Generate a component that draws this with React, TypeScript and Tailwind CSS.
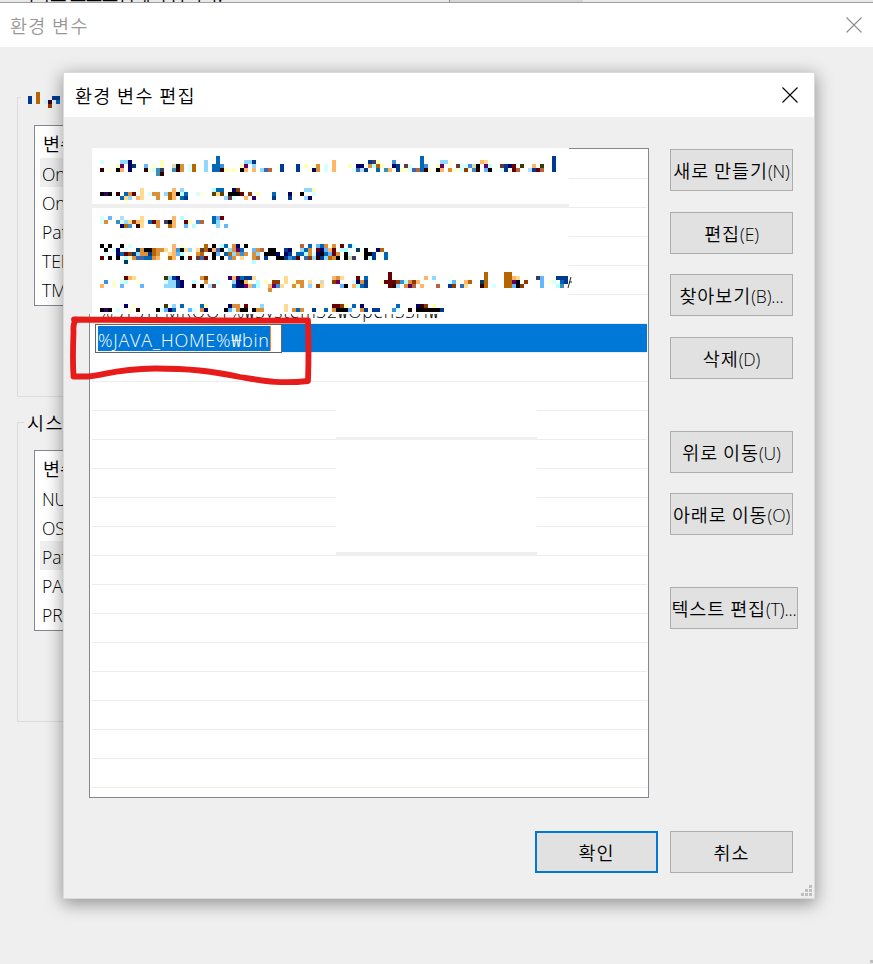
import React from "react";

const FONT = "font-['Open_Sans','Noto_Sans_CJK_KR',sans-serif]";
const KR = "font-['Noto_Sans_CJK_KR',sans-serif] font-[350]";

const PALETTE: Record<string, string> = {
  k: "#000000", d: "#330000", n: "#000066", b: "#0066b6", B: "#003a90",
  l: "#90d8ff", L: "#66b6ff", A: "#3a90db", c: "#d8ffff", C: "#b6ffff",
  y: "#ffffd8", Y: "#ffffb6", o: "#db9038", O: "#ffb666", t: "#ffdb90",
  r: "#b66600", p: "#330066", P: "#660066", m: "#660000", s: "#903a00",
  g: "#dbdbb6", h: "#3a90b6", i: "#3a66b6", j: "#003a66", q: "#b66638",
  v: "#3a3a00", w: "#b6dbff", x: "#664000", z: "#663838", u: "#3a3a66",
};

/* Each entry is a 4px tall strip: [y, "column+cells ..."] */
const MOSAIC: [number, string][] = [
  [156, "29b 80b 113B"],
  [160, "0c 5lln 15Y 26l 29b 36llB 58O 67BuY 73A 80b 85lly 95Ot 113B"],
  [164, "4YP 7nj 11L 13y 15Y 18gko 22cr 26l 28bbA 35YP 38l 45B 49B 51Y 53yo 56c 58O 62Y 64nn 67oCrY 73nB 76zc 80bA 84YP 87y 89zccAgk 96PC 100zBnm 105v 108O 110v 113B"],
  [168, "0d 2y 4kO 7n 11dychu 18hdo 22cr 26l 28bbdYyY 35kO 38O 40liq 45B 49B 52yno 56c 58O 63ciwB 69b 71hO 74BYyciqbdy 84kO 87oyycs 93hd 96Lk 100cBy 103mq 107wBmq 113B"],
  [172, "14hd"],
  [188, "10t 18O 20l 28Cbb 33ns 51llY"],
  [192, "0kpk 4d 6bom 10t 12coo 16lrOkCb 24cy 28xtx 32kkkm 37s 39Y 43b 47ny 50k 53c"],
  [196, "5btl 9Ot 14o 17rO 20bB 31lzc 36O 38p 43B 47B 51ln"],
  [200, "6y"],
  [216, "0c 2L 5w 10t 18O 20C 28bLm"],
  [220, "0co 4hcltsOt 12bmo 16ukO 21mY 24Aq 28bl"],
  [224, "5nrA 9dt 14o 17rO 21L 23C 29l 31L"],
  [244, "0k 2k 5k 7c 18O 20y 26r 28k 30Cb 33on 36k 50q 52b 54Lbo 58o 60m 62bc"],
  [248, "1k 3cn 6c 9jokk 13ro 15ot 18OAktl 24tzrd 28Oik 32loPb 38Loq 42kk 46Bny 50lbo 54mnLOm 60CC 64j 66k 69nr"],
  [252, "1c 4nbmsjl 10ooBro 17tOLC 22y 24or 28kL 31brlo 35Ao 38ol 41kkkn 46nB 49bbC 52ocnkbLmo 61kc 65ykkB 71b"],
  [256, "0m 2k 4k 6CyoiibboO 17rO 20kcm 24zim 28k 30k 32Ao 35t 38oq 41B 44kkBAbm 51isl 54dBlro 59k 61kgu 66kcB 71b"],
  [260, "6j 38C"],
  [272, "72m 96r 101rr"],
  [276, "6mOt 16vlBn 25os 32pO 34pbBBt 46t 58Oot 64m 66b 72m 81O 83l 96r 101rrOt 109uL 114BBB"],
  [280, "1A 3y 5cC 9y 16cllBn 23C 26o 29c 33lnkOy 39C 41Y 43ss 46t 48yoo 52t 55g 58sP 63cnoB 70ym 72mmsACosO 87cLy 91Or 95jr 101rrPk 106s 110L 112yc 115bB"],
  [284, "0O 3y 5L 10L 16lllBn 23d 25k 27wz 33bnnPO 38LC 42OPAt 48oyo 52l 54st 60Lk 63OCbB 72mdl 76oPq 80O 84q 87Bs 90it 95dr 98c 101rrLk 105s 110L 114Ch"],
  [288, "42o"],
  [304, "6n 8y 16v 18l 20b 25bY 32noo 36m 40l 46t 58mmsY 63b 65n 74b 79nds 83Y"],
  [308, "0kpk 4c 7y 9d 14kcLnb 22Lc 25on 31kLcokk 38koo 46t 48ob 50o 53B 55yb 58okkkL 65oB 68BB 73Ac 77d 79kkkkkkB"],
];

function Mosaic() {
  const cells: React.ReactElement[] = [];
  MOSAIC.forEach(([y, row]) =>
    row.split(" ").forEach((token) => {
      const col = parseInt(token, 10);
      const letters = token.replace(/^\d+/, "");
      letters.split("").forEach((ch, i) => {
        cells.push(
          <rect key={`${y}-${col + i}`} x={100 + (col + i) * 4 - 89} y={y - 148} width={4} height={4} fill={PALETTE[ch]} />,
        );
      });
    }),
  );
  return (
    <svg className="absolute left-0 top-0" width="560" height="175" shapeRendering="crispEdges">
      <rect x="0" y="0" width="3" height="166" fill="#efefef" />
      <rect x="3" y="0" width="477" height="166" fill="#ffffff" />
      <rect x="3" y="56" width="477" height="4" fill="#efefef" />
      {cells}
      <path d="M482 129l-3 11M480 134h3" stroke="#222" fill="none" shapeRendering="auto" />
    </svg>
  );
}

function Close({ color }: { color: string }) {
  return (
    <svg width="16" height="16" viewBox="0 0 16 16">
      <path d="M.5 .5L15.5 15.5M15.5 .5L.5 15.5" stroke={color} strokeWidth="1.1" />
    </svg>
  );
}

function Grip({ className }: { className: string }) {
  return (
    <svg className={className} width="11" height="11" shapeRendering="crispEdges" fill="#bfbfbf">
      <path d="M8 0h3v3h-3zM4 4h3v3h-3zM8 4h3v3h-3zM0 8h3v3h-3zM4 8h3v3h-3zM8 8h3v3h-3z" />
    </svg>
  );
}

function VarList({ names, selected }: { names: string[]; selected: number }) {
  return (
    <div className="h-[181px] w-[600px] border border-[#828790] bg-white pl-[5px] pt-[3px]">
      <div className={`h-[29px] pl-[3px] text-[18.5px] leading-[28px] ${KR}`}>변수</div>
      {names.map((name, i) => (
        <div key={name + i} className={`h-[29px] pl-[2px] text-[17.5px] font-[350] leading-[32px] ${i === selected ? "bg-[#efefef]" : ""}`}>
          {name}
        </div>
      ))}
    </div>
  );
}

function Button({ label, hot = "", className = "", primary = false }: { label: string; hot?: string; className?: string; primary?: boolean }) {
  return (
    <button
      className={`flex h-[42px] shrink-0 items-center justify-center overflow-hidden whitespace-nowrap bg-[#e1e1e1] text-black ${
        primary ? "border-2 border-[#0078d7]" : "border border-[#adadad]"
      } ${className}`}
    >
      <span className={`${KR} text-[18.5px] leading-[40px] tracking-[0.9px]`}>{label}</span>
      {hot && <span className="relative top-[1px] text-[17.5px] font-[350] leading-[40px] tracking-[-0.1px]">{hot}</span>}
    </button>
  );
}

export default function App() {
  return (
    <div className={`relative flex h-[964px] w-[873px] flex-col overflow-hidden bg-[#efefef] text-black ${FONT}`}>
      <div className="flex h-[3px] shrink-0 overflow-hidden border-b border-[#a0a0a0] bg-[#e8e8e8]">
        <div className={`relative w-[450px] border-r border-[#888] pl-[18px] ${KR}`}>
          <span className="relative -top-[16px] block whitespace-nowrap text-[18px] leading-[20px] tracking-[-0.5px]">시작도 프로그램에서 합니다.</span>
        </div>
        <div className="w-[133px] bg-[#d6d6d6]" />
      </div>
      <header className="flex h-[44px] shrink-0 items-center justify-between bg-white pl-[10px] pr-[11px]">
        <span className={`${KR} text-[18.5px] leading-[42px] tracking-[1.3px] text-[#999]`}>환경 변수</span>
        <Close color="#8c8c8c" />
      </header>

      <main className="flex flex-col gap-[25px] pl-[17px] pt-[50px]">
        <section className="relative h-[300px] w-[640px] border border-[#dcdcdc] pl-[16px] pt-[27px]">
          <svg className="absolute left-[3px] top-[-9px] bg-[#efefef]" width="50" height="20" shapeRendering="crispEdges">
            <path d="M7 7h4v8h-4z" fill="#003a90" />
            <path d="M15 3h4v12h-4z" fill="#b66600" />
            <path d="M23 11h4v4h-4z" fill="#c8f4f4" />
            <path d="M27 11h4v4h-4z" fill="#330033" />
            <path d="M27 15h4v4h-4z" fill="#903a00" />
            <path d="M31 7h8v4h-8z" fill="#003a90" />
            <path d="M35 11h4v4h-4z" fill="#0066b6" />
          </svg>
          <VarList names={["OneDrive", "OneDriveConsumer", "Path", "TEMP", "TMP"]} selected={0} />
        </section>
        <section className="relative h-[300px] w-[640px] border border-[#dcdcdc] pl-[16px] pt-[27px]">
          <span className={`absolute left-[6px] top-[-14px] bg-[#efefef] px-[3px] text-[18.5px] leading-[26px] tracking-[1.5px] ${KR}`}>시스템 변수</span>
          <VarList names={["NUMBER_OF_PROCESSORS", "OS", "Path", "PATHEXT", "PROCESSOR"]} selected={2} />
        </section>
      </main>
      <Grip className="absolute -bottom-[7px] right-0" />

      <div className="absolute left-[63px] top-[72px] flex h-[827px] w-[752px] flex-col border border-[#dadada] bg-[#efefef] shadow-[0_4px_16px_1px_rgba(0,0,0,0.38)]">
        <header className="flex h-[44px] shrink-0 items-center justify-between bg-white pl-[11px] pr-[16px]">
          <span className={`${KR} text-[18.5px] leading-[42px] tracking-[1.3px]`}>환경 변수 편집</span>
          <Close color="#000" />
        </header>

        <div className="flex gap-[21px] pl-[25px] pt-[31px]">
          <div className="relative h-[650px] w-[560px] shrink-0 border border-[#828790] bg-white pl-[2px] pr-px">
            {Array.from({ length: 22 }, (_, i) => (
              <div
                key={i}
                className={`relative border-b border-[#ececec] ${i === 0 ? "h-[30px]" : "h-[29px]"} ${i === 6 ? "bg-[#0078d7]" : ""}`}
              >
                {i === 5 && (
                  <span className="block whitespace-nowrap pl-[7px] text-[17.5px] font-[350] leading-[32px] tracking-[0.75px]">%SYSTEMROOT%₩System32₩OpenSSH₩</span>
                )}
                {i === 6 && (
                  <div className="absolute left-0 top-0 flex bg-white pl-[3px]">
                    <div className="flex h-[29px] w-[187px] items-center border border-[#646464] bg-white pl-[2px]">
                      <span className="h-[25px] w-[173px] whitespace-nowrap border-r border-[#ff8728] bg-[#0078d7] text-[18px] font-[350] leading-[29px] tracking-[0.75px] text-white">
                        %JAVA_HOME%₩bin
                      </span>
                    </div>
                  </div>
                )}
              </div>
            ))}
            <div className="absolute left-[246px] top-[257px] h-[34px] w-[201px] border-b-[3px] border-[#efefef] bg-white" />
            <div className="absolute left-[246px] top-[292px] h-[115px] w-[201px] border-b-[4px] border-[#efefef] bg-white" />
            <div className="absolute -left-px -top-px">
              <Mosaic />
            </div>
          </div>

          <div className="flex flex-col items-start pt-px">
            <Button className="w-[123px]" label="새로 만들기" hot="(N)" />
            <Button className="mt-[21px] w-[123px]" label="편집" hot="(E)" />
            <Button className="mt-[20px] w-[123px]" label="찾아보기" hot="(B)..." />
            <Button className="mt-[21px] w-[123px]" label="삭제" hot="(D)" />
            <Button className="mt-[52px] w-[123px]" label="위로 이동" hot="(U)" />
            <Button className="mt-[20px] w-[123px]" label="아래로 이동" hot="(O)" />
            <Button className="mt-[52px] w-[128px]" label="텍스트 편집" hot="(T)..." />
          </div>
        </div>

        <footer className="mt-[33px] flex justify-end gap-[12px] pr-[21px]">
          <Button className="w-[123px]" label="확인" primary />
          <Button className="w-[123px]" label="취소" />
        </footer>
        <Grip className="absolute bottom-[2px] right-[2px]" />
      </div>

      <svg className="absolute left-[60px] top-[305px]" width="260" height="90" fill="none">
        <path
          d="M14 14.5C40 14.5 120 16 248 15.5Q249 44 248 76C220 79 205 76 180 72C150 66 130 63.500 95 63.500C55 64 45 70 28 71.500L13.500 71.500C12.500 55 13 40 13.500 27Q13 18 16 14.500"
          stroke="#e81b1b"
          strokeWidth="5.800"
          strokeLinecap="round"
          strokeLinejoin="round"
        />
      </svg>
    </div>
  );
}
